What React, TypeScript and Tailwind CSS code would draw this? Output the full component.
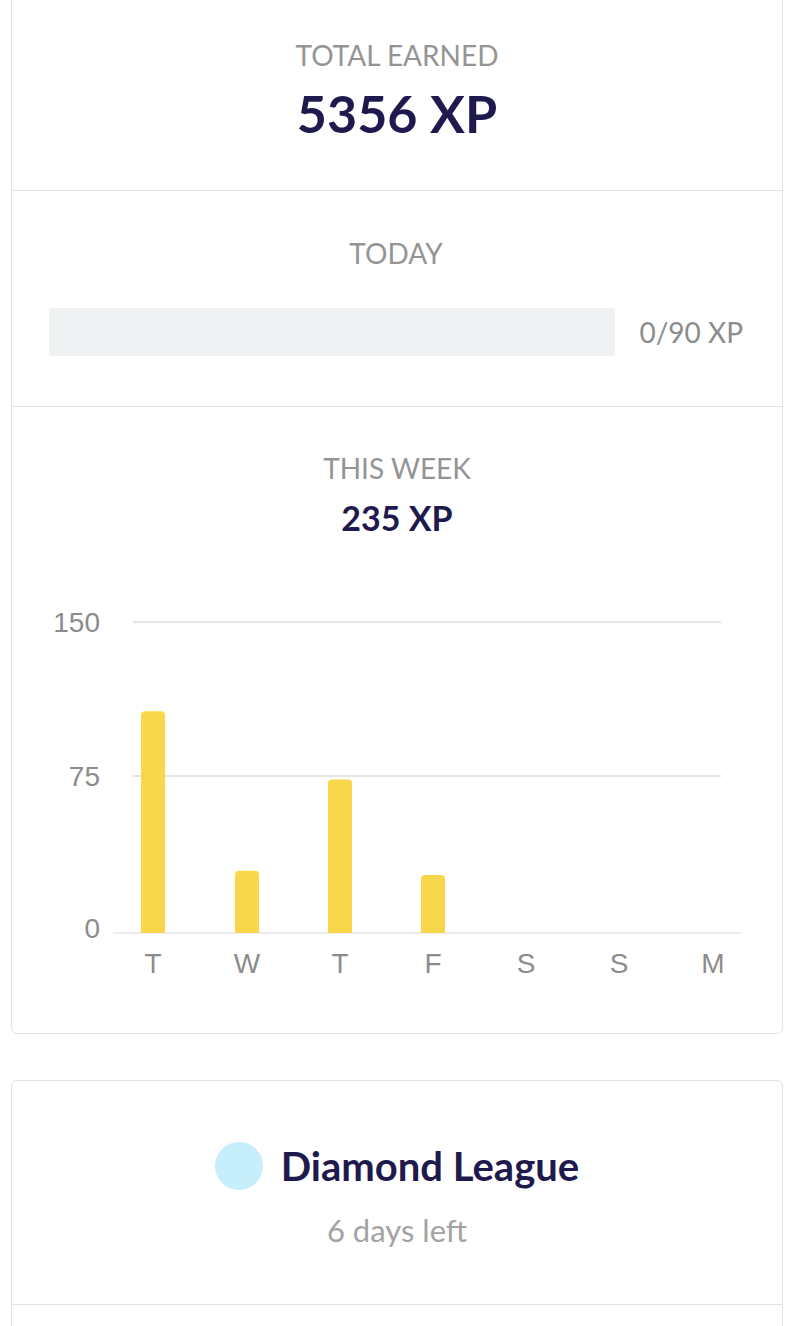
import React from 'react';

const days = [
  { label: 'T', value: 107 },
  { label: 'W', value: 30 },
  { label: 'T', value: 74 },
  { label: 'F', value: 28 },
  { label: 'S', value: 0 },
  { label: 'S', value: 0 },
  { label: 'M', value: 0 },
];

const WeekChart = () => {
  const base = 333;
  const scale = 311 / 150;
  const xs = [141, 235, 328, 421, 514, 607, 701];

  return (
    <svg width="770" height="400" viewBox="0 0 770 400" className="block">
      <line x1="121" y1="22" x2="709" y2="22" stroke="#e6e6e6" strokeWidth="2" />
      <line x1="121" y1="176" x2="709" y2="176" stroke="#e6e6e6" strokeWidth="2" />
      <line x1="101" y1={base} x2="729" y2={base} stroke="#ececec" strokeWidth="2" />
      <g fill="#8c8c8c" fontSize="28" fontFamily="'Liberation Sans', Arial, sans-serif" textAnchor="end">
        <text x="88" y="32">150</text>
        <text x="88" y="186">75</text>
        <text x="88" y="338">0</text>
      </g>
      {days.map((d, i) => {
        if (!d.value) return null;
        const h = d.value * scale;
        const x = xs[i] - 12;
        const y = base - h;
        const r = 4;
        return (
          <path
            key={i}
            fill="#f8d84a"
            d={`M${x} ${base} V${y + r} Q${x} ${y} ${x + r} ${y} H${x + 24 - r} Q${x + 24} ${y} ${x + 24} ${y + r} V${base} Z`}
          />
        );
      })}
      <g fill="#8c8c8c" fontSize="28" fontFamily="'Liberation Sans', Arial, sans-serif" textAnchor="middle">
        {days.map((d, i) => (
          <text key={i} x={xs[i]} y="373">
            {d.label}
          </text>
        ))}
      </g>
    </svg>
  );
};

export default function App() {
  return (
    <div className="min-h-screen bg-white pl-[11px] pr-[9px] font-['Lato',sans-serif] overflow-hidden">
      <div className="-mt-[20px] rounded-md border border-[#e2e2e2]">
        <section className="h-[210px] border-b border-[#e2e2e2] flex flex-col items-center pt-[57px]">
          <div className="text-[28px] leading-[34px] text-[#949494]">TOTAL EARNED</div>
          <div className="mt-[11px] text-[52px] leading-[60px] font-bold text-[#1f1a4e]">5356 XP</div>
        </section>

        <section className="h-[216px] border-b border-[#e2e2e2] pt-[45px] pl-[37px] pr-[39px]">
          <div className="text-center text-[28px] leading-[34px] text-[#949494]">TODAY</div>
          <div className="mt-[38px] flex items-center gap-[24px]">
            <div className="flex-1 h-[48px] rounded-[4px] bg-[#f0f1f2]" />
            <div className="text-[28px] leading-[34px] text-[#8c8c8c]">0/90 XP</div>
          </div>
        </section>

        <section className="h-[626px] pt-[44px] flex flex-col items-center">
          <div className="text-[28px] leading-[34px] text-[#949494]">THIS WEEK</div>
          <div className="mt-[13px] text-[34px] leading-[40px] font-bold text-[#1f1a4e]">235 XP</div>
          <div className="mt-[62px] self-stretch">
            <WeekChart />
          </div>
        </section>
      </div>

      <div className="mt-[46px] rounded-md border border-[#e2e2e2]">
        <section className="h-[224px] border-b border-[#e2e2e2] flex flex-col items-center pt-[61px]">
          <div className="flex items-center gap-[18px]">
            <div className="w-[48px] h-[48px] rounded-full bg-[#c6eefb]" />
            <div className="text-[40px] leading-[48px] font-bold text-[#1f1a4e]">Diamond League</div>
          </div>
          <div className="mt-[22px] text-[31px] leading-[36px] text-[#a3a3a3]">6 days left</div>
        </section>
        <div className="h-[80px]" />
      </div>
    </div>
  );
}
